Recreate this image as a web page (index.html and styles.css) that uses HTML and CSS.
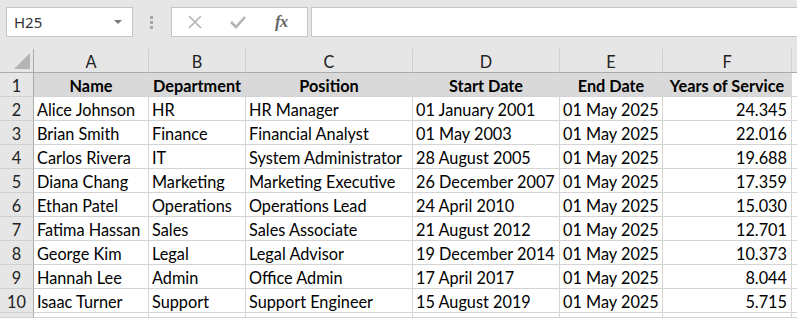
FILE: index.html
```html
<!DOCTYPE html>
<html>
<head>
    <title>Employees - Sheet</title>
    <link rel="stylesheet" href="styles.css">
</head>
<body>
    <div class="formula-bar">
        <div class="name-box">
            <span>H25</span>
            <span class="caret"></span>
        </div>
        <div class="grip"><i></i><i></i><i></i></div>
        <div class="fx-buttons">
            <svg class="icon" width="16" height="16" viewBox="0 0 16 16">
                <path d="M2 2 L14 14 M14 2 L2 14" stroke="#b3b3b3" stroke-width="1.6" fill="none"/>
            </svg>
            <svg class="icon" width="18" height="16" viewBox="0 0 18 16">
                <path d="M2 8 L7 13 L16 3" stroke="#b3b3b3" stroke-width="2.6" fill="none"/>
            </svg>
            <span class="fx">fx</span>
        </div>
        <div class="formula-input"></div>
    </div>

    <div class="sheet" id="sheet"></div>

    <script>
        const columns = [
            { key: 'A', title: 'Name' },
            { key: 'B', title: 'Department' },
            { key: 'C', title: 'Position' },
            { key: 'D', title: 'Start Date' },
            { key: 'E', title: 'End Date' },
            { key: 'F', title: 'Years of Service', num: true }
        ];

        const rows = [
            ['Alice Johnson', 'HR', 'HR Manager', '01 January 2001', '01 May 2025', '24.345'],
            ['Brian Smith', 'Finance', 'Financial Analyst', '01 May 2003', '01 May 2025', '22.016'],
            ['Carlos Rivera', 'IT', 'System Administrator', '28 August 2005', '01 May 2025', '19.688'],
            ['Diana Chang', 'Marketing', 'Marketing Executive', '26 December 2007', '01 May 2025', '17.359'],
            ['Ethan Patel', 'Operations', 'Operations Lead', '24 April 2010', '01 May 2025', '15.030'],
            ['Fatima Hassan', 'Sales', 'Sales Associate', '21 August 2012', '01 May 2025', '12.701'],
            ['George Kim', 'Legal', 'Legal Advisor', '19 December 2014', '01 May 2025', '10.373'],
            ['Hannah Lee', 'Admin', 'Office Admin', '17 April 2017', '01 May 2025', '8.044'],
            ['Isaac Turner', 'Support', 'Support Engineer', '15 August 2019', '01 May 2025', '5.715']
        ];

        function cell(cls, text) {
            const div = document.createElement('div');
            div.className = cls;
            div.textContent = text || '';
            return div;
        }

        function buildSheet() {
            const sheet = document.getElementById('sheet');

            // column letters
            const corner = cell('corner');
            corner.appendChild(cell('select-all'));
            sheet.appendChild(corner);
            columns.forEach(col => sheet.appendChild(cell('col-head', col.key)));
            sheet.appendChild(cell('col-head'));

            // header row
            sheet.appendChild(cell('row-head', '1'));
            columns.forEach(col => sheet.appendChild(cell('cell title', col.title)));
            sheet.appendChild(cell('cell'));

            // data rows
            rows.forEach((row, i) => {
                sheet.appendChild(cell('row-head', String(i + 2)));
                row.forEach((value, j) => {
                    sheet.appendChild(cell(columns[j].num ? 'cell num' : 'cell', value));
                });
                sheet.appendChild(cell('cell'));
            });

            // start of row 11, cut off by the window
            sheet.appendChild(cell('row-head'));
            columns.forEach(() => sheet.appendChild(cell('cell')));
            sheet.appendChild(cell('cell'));
        }

        buildSheet();
    </script>
</body>
</html>
```

FILE: styles.css
```css
html, body {
    height: 100%;
}
body {
    margin: 0;
    background-color: #e6e6e6;
    font-family: Lato, "Liberation Sans", sans-serif;
    overflow: hidden;
}
.formula-bar {
    display: flex;
    align-items: flex-start;
    height: 49px;
    padding-top: 7px;
    box-sizing: border-box;
}
.name-box {
    display: flex;
    align-items: center;
    justify-content: space-between;
    width: 127px;
    height: 30px;
    margin-left: 6px;
    padding: 0 10px 0 7px;
    box-sizing: border-box;
    background-color: #fff;
    border: 1px solid #c6c6c6;
    font-family: "Noto Sans", sans-serif;
    font-size: 15px;
    color: #333;
}
.caret {
    width: 0;
    height: 0;
    border-left: 4px solid transparent;
    border-right: 4px solid transparent;
    border-top: 4px solid #777;
}
.grip {
    display: flex;
    flex-direction: column;
    gap: 2px;
    width: 3px;
    margin: 9px 18px 0 17px;
}
.grip i {
    width: 3px;
    height: 3px;
    background-color: #a6a6a6;
}
.fx-buttons {
    display: flex;
    align-items: center;
    width: 137px;
    height: 30px;
    box-sizing: border-box;
    background-color: #fff;
    border: 1px solid #c6c6c6;
    padding-left: 15px;
}
.icon {
    margin-right: 26px;
}
.fx-buttons .icon + .icon {
    margin-right: 28px;
}
.fx {
    font-family: "Liberation Serif", serif;
    font-style: italic;
    font-weight: bold;
    font-size: 17px;
    color: #666;
    letter-spacing: -1px;
}
.formula-input {
    flex: 1;
    height: 30px;
    margin-left: 3px;
    box-sizing: border-box;
    background-color: #fff;
    border: 1px solid #c6c6c6;
    border-right: none;
}
.sheet {
    display: grid;
    grid-template-columns: 34px 115px 97px 167px 147px 103px 129px 1fr;
    grid-template-rows: repeat(11, 24px) 5px;
    background-color: #fff;
    font-size: 16.3px;
    overflow: hidden;
}
.corner,
.col-head {
    background-color: #e6e6e6;
    border-bottom: 1px solid #ababab;
    border-right: 1px solid #d0d0d0;
}
.corner {
    position: relative;
    border-right-color: #ababab;
}
.select-all {
    position: absolute;
    right: 3px;
    bottom: 3px;
    width: 0;
    height: 0;
    border-left: 16px solid transparent;
    border-bottom: 16px solid #b4b4b4;
}
.col-head {
    display: flex;
    align-items: center;
    justify-content: center;
    color: #222;
    padding-top: 2px;
}
.row-head {
    display: flex;
    align-items: center;
    justify-content: center;
    background-color: #e6e6e6;
    border-right: 1px solid #ababab;
    border-bottom: 1px solid #d0d0d0;
    color: #222;
    padding-top: 2px;
    overflow: hidden;
}
.cell {
    border-right: 1px solid #d4d4d4;
    border-bottom: 1px solid #d4d4d4;
    padding: 3px 3px 0 3px;
    white-space: nowrap;
    overflow: hidden;
    line-height: 20px;
    color: #000;
}
.title {
    background-color: #d9d9d9;
    border-right-color: #d9d9d9;
    font-weight: bold;
    text-align: center;
}
.num {
    text-align: right;
    padding-right: 4px;
}
```
